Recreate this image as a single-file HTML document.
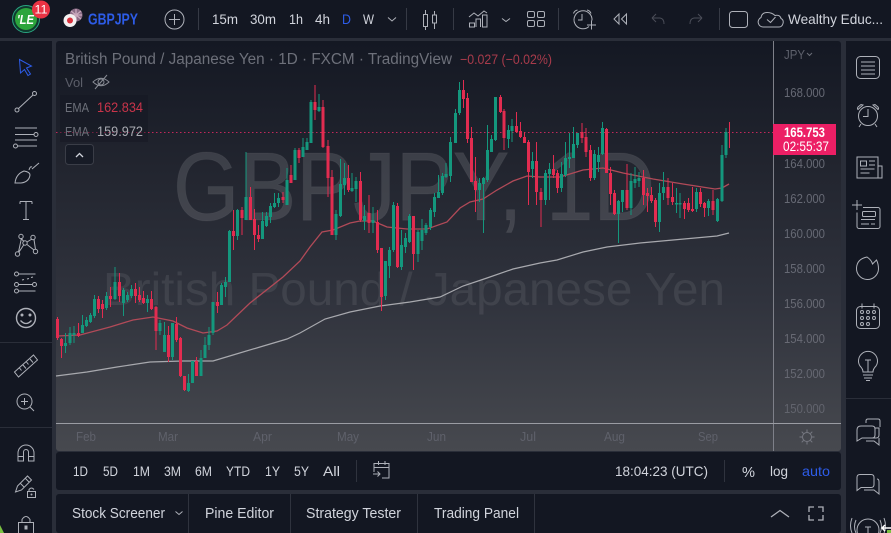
<!DOCTYPE html>
<html lang="en"><head><meta charset="utf-8"><title>GBPJPY</title>
<style>
html,body{margin:0;padding:0;background:#2a2e39;width:891px;height:533px;overflow:hidden}
svg{display:block;font-family:"Liberation Sans",sans-serif;filter:blur(.3px)}
.i{fill:none;stroke:#aeb1b9;stroke-width:1}
.t{fill:#d1d4dc;font-size:14px}
</style></head><body>
<svg width="891" height="533" viewBox="0 0 891 533" xmlns="http://www.w3.org/2000/svg">
<defs><linearGradient id="bg" gradientUnits="userSpaceOnUse" x1="0" y1="41" x2="0" y2="451">
<stop offset="0" stop-color="#141823"/><stop offset=".31" stop-color="#22252f"/><stop offset=".63" stop-color="#30333d"/><stop offset="1" stop-color="#47494f"/></linearGradient></defs>
<rect width="891" height="533" fill="#2a2e39"/>
<rect width="891" height="38" fill="#131722"/>
<rect x="0" y="41" width="52" height="492" fill="#131722"/>
<rect x="846" y="41" width="45" height="492" fill="#131722"/>
<rect x="56" y="41" width="785" height="410" rx="3" fill="url(#bg)"/>
<rect x="56" y="452" width="785" height="38" rx="3" fill="#131722"/>
<rect x="56" y="494" width="785" height="39" rx="3" fill="#131722"/>

<!-- watermark -->
<text x="173" y="220" font-size="97" fill="#fff" fill-opacity=".125" stroke="#fff" stroke-opacity=".04" textLength="482" lengthAdjust="spacingAndGlyphs">GBPJPY, 1D</text>
<text x="103" y="305" font-size="46" fill="#fff" fill-opacity=".08" textLength="622" lengthAdjust="spacingAndGlyphs">British Pound / Japanese Yen</text>

<!-- price line -->
<path d="M56 132.500H773" stroke="#c2285a" stroke-width="1" stroke-dasharray="1.500 2.500" fill="none"/>

<!-- legend -->
<rect x="60" y="95" width="88" height="47" fill="#131722" fill-opacity=".45"/>
<text x="65" y="64" font-size="15.500" fill="#6d707a" textLength="387" lengthAdjust="spacingAndGlyphs">British Pound / Japanese Yen · 1D · FXCM · TradingView</text>
<text x="460" y="64" font-size="14" fill="#a83b4b" textLength="92" lengthAdjust="spacingAndGlyphs">−0.027 (−0.02%)</text>
<text x="65" y="87" font-size="13" fill="#5b5e69">Vol</text>
<g class="i" style="stroke:#888b94"><path d="M93 82q8-7.500 16 0q-8 7.500-16 0z"/><circle cx="101" cy="82" r="3"/><path d="M95 89L107 75"/></g>
<text x="65" y="112" font-size="13" fill="#6d707a" textLength="24" lengthAdjust="spacingAndGlyphs">EMA</text>
<text x="97" y="112" font-size="13.500" fill="#c8344a" textLength="46" lengthAdjust="spacingAndGlyphs">162.834</text>
<text x="65" y="136" font-size="13" fill="#6d707a" textLength="24" lengthAdjust="spacingAndGlyphs">EMA</text>
<text x="97" y="136" font-size="13.500" fill="#a9abb2" textLength="46" lengthAdjust="spacingAndGlyphs">159.972</text>
<rect x="65.500" y="144.500" width="28" height="20" rx="3" fill="#171b26" stroke="#3a3d47"/>
<path d="M76 157l3.500-3.500 3.500 3.500" fill="none" stroke="#d1d4dc" stroke-width="1.300"/>

<!-- EMAs -->
<path fill="none" stroke="#b14a58" stroke-width="1.300" d="M57 336L80 335L110 327L133 320L153 317L173 321L187 328L203 333L217 331L227 325L250 303L283 277L300 261L310 247L322 232L333 230L350 223L360 221L373 221L387 227L407 229L427 229L447 222L460 208L470 202L483 199L497 190L513 181L527 176L540 177L560 177L583 170L603 168L623 173L653 179L683 184L715 189L722 188L729 184"/>
<path fill="none" stroke="#a8a9ae" stroke-width="1.200" d="M56 376L87 372L117 367L150 362L183 361L213 361L233 355L260 347L287 339L300 333L325 319L350 312L380 306L410 302L440 297L463 286L487 278L513 269L540 263L557 260L583 252L607 247L640 243L673 240L717 236L729 233"/>

<!-- green wicks -->
<path fill="none" stroke="#14977d" stroke-width="1" d="M65.500 333V353M70 327V345M74 326V343M82.500 315V333M86.500 317V327M90.500 313V323M94.500 295V318M106.500 292V310M115 267V300M123.500 288V316M127.500 292V302M131.500 285V298M147.500 295V312M160 320V335M164.500 322V352M172.500 323V360M188.500 374V392M192.500 361V383M201 350V376M205 337V358M209 327V350M213 302V335M221.500 283V305M225.500 277V297M229.500 230V282M237.500 209V240M246 152V220M262.500 212V239M266.500 212V227M270.500 203V223M274.500 193V208M278.500 193V207M287 168V205M295 148V180M303 138V157M307 138V150M311 100V143M319 94V112M336 210V240M340.500 159V217M344.500 163V195M352 173V192M356 177V202M364.500 205V230M373 207V233M385.500 261V300M389.500 247V278M393.500 202V252M401.500 230V270M405.500 233V253M409.500 214V243M418 230V262M422 219V250M426 223V235M430.500 208V230M434.500 193V217M438.500 175V198M442.500 173V195M446 163V178M450.500 137V182M455.500 109V143M459.500 82V115M479.500 178V202M483.500 177V233M487.500 125V182M491.500 135V152M495.500 97V141M508.500 125V148M512 119V142M532.500 152V178M545.500 170V205M549.500 163V200M561.500 162V192M565.500 142V177M569.500 133V168M573.500 127V158M577.500 133V148M594.500 150V180M598.500 147V172M602.500 122V155M618.500 200V243M622.500 190V212M631 173V215M635 167V188M639 172V187M659.500 183V232M663.500 172V200M676.500 188V213M680 193V218M696.500 188V212M708.500 199V216M717.500 198V222M722 145V202M726 128V158"/>
<!-- green bodies -->
<path fill="none" stroke="#14977d" stroke-width="3" d="M65.500 343V346M70 333V343M74 333V335M82.500 325V333M86.500 320V326M90.500 315V322M94.500 299V316M106.500 296V308M115 282V299M123.500 290V303M127.500 295V300M131.500 289V296M147.500 299V303M160 323V331M164.500 335V352M172.500 323V357M188.500 383V391M192.500 361V383M201 358V376M205 345V358M209 335V345M213 302V333M221.500 285V305M225.500 282V287M229.500 231V282M237.500 210V236M246 197V220M262.500 221V239M266.500 216V226M270.500 206V217M274.500 203V207M278.500 198V203M287 180V205M295 150V180M303 147V157M307 142V150M311 102V143M319 107V111M336 214V235M340.500 184V216M344.500 178V185M352 188V191M356 181V189M364.500 216V221M373 220V223M385.500 261V296M389.500 250V266M393.500 205V250M401.500 245V267M405.500 238V247M409.500 216V242M418 232V254M422 230V241M426 225V233M430.500 210V227M434.500 197V212M438.500 192V198M442.500 176V193M446 174V177M450.500 142V176M455.500 113V143M459.500 90V113M479.500 183V190M483.500 178V184M487.500 150V180M491.500 139V152M495.500 97V140M508.500 130V139M512 126V131M532.500 161V169M545.500 173V200M549.500 169V174M561.500 174V188M565.500 158V175M569.500 157V159M573.500 144V158M577.500 133V145M594.500 154V178M598.500 155V162M602.500 128V154M618.500 201V214M622.500 190V202M631 181V208M635 179V183M639 178V181M659.500 193V222M663.500 187V193M676.500 203V204.500M680 203V204.500M696.500 192V209M708.500 201V208M717.500 199V221M722 155V201M726 132V155"/>
<!-- red wicks -->
<path fill="none" stroke="#e22c50" stroke-width="1" d="M57.500 317V340M61.500 338V358M78.500 323V337M98.500 296V313M102.500 300V318M110.500 287V307M119.500 273V302M135.500 283V303M139.500 287V302M143.500 291V304M151.500 291V310M156 306V350M168.500 326V362M176.500 317V342M180.500 337V377M184.500 376V391M196.500 357V376M217.500 292V313M233.500 210V250M242 207V235M250.500 187V220M254.500 209V250M258.500 225V242M283 192V203M291 165V183M299 148V163M315 85V120M323 100V148M328 140V197M332 170V235M348.500 165V192M360.500 172V222M369 195V233M377.500 210V253M381.500 248V311M397.500 203V268M413.500 216V270M463.500 80V108M467.500 93V143M471.500 127V182M475.500 157V212M500.500 95V113M504 109V150M516.500 112V133M520.500 122V138M524.500 132V143M528.500 140V205M536.500 142V205M541 188V227M553.500 155V178M557.500 170V193M582 123V143M586 128V157M590.500 145V181M606.500 128V173M610.500 167V205M614.500 190V215M627 164V210M643.500 170V205M647.500 188V212M651.500 187V203M655.500 198V227M668 178V205M672.500 183V205M684.500 201V219M688.500 198V212M692.500 187V212M700.500 188V207M704.500 202V217M713 190V215M729.500 122V148"/>
<!-- red bodies -->
<path fill="none" stroke="#e22c50" stroke-width="3" d="M57.500 319V338M61.500 339V346M78.500 333V336M98.500 299V309M102.500 304V309M110.500 296V299M119.500 282V296M135.500 289V296M139.500 295V300M143.500 298V303M151.500 299V309M156 307V331M168.500 335V357M176.500 324V340M180.500 338V376M184.500 376V390M196.500 361V376M217.500 302V306M233.500 231V236M242 210V218M250.500 197V220M254.500 219V235M258.500 235V239M283 197V200M291 175V183M299 150V158M315 102V110M323 107V147M328 146V178M332 177V235M348.500 178V190M360.500 181V220M369 213V223M377.500 222V250M381.500 248V297M397.500 206V267M413.500 216V254M463.500 90V99M467.500 98V139M471.500 138V182M475.500 181V190M500.500 97V112M504 111V138M516.500 126V132M520.500 131V137M524.500 137V143M528.500 142V172M536.500 161V192M541 192V200M553.500 169V175M557.500 173V188M582 132V138M586 137V152M590.500 150V178M606.500 129V173M610.500 173V194M614.500 193V214M627 190V208M643.500 178V195M647.500 193V196M651.500 195V201M655.500 200V222M668 187V198M672.500 197V202M684.500 203V209M688.500 203V210M692.500 209V211M700.500 192V204M704.500 203V208M713 201V210"/>

<!-- axes -->
<path d="M773.500 41V451" stroke="#7e8089"/>
<path d="M56 423.500H841" stroke="#9a9ca3"/>
<g font-size="13" fill="#666974">
<text x="784" y="59" fill="#5d606b" textLength="21" lengthAdjust="spacingAndGlyphs">JPY</text>
<text x="784" y="97" textLength="41" lengthAdjust="spacingAndGlyphs">168.000</text>
<text x="784" y="133" textLength="41" lengthAdjust="spacingAndGlyphs">166.000</text>
<text x="784" y="168" textLength="41" lengthAdjust="spacingAndGlyphs">164.000</text>
<text x="784" y="203" textLength="41" lengthAdjust="spacingAndGlyphs">162.000</text>
<text x="784" y="238" textLength="41" lengthAdjust="spacingAndGlyphs">160.000</text>
<text x="784" y="273" textLength="41" lengthAdjust="spacingAndGlyphs">158.000</text>
<text x="784" y="308" textLength="41" lengthAdjust="spacingAndGlyphs" fill="#686a74">156.000</text>
<text x="784" y="343" textLength="41" lengthAdjust="spacingAndGlyphs" fill="#686a74">154.000</text>
<text x="784" y="378" textLength="41" lengthAdjust="spacingAndGlyphs" fill="#666872">152.000</text>
<text x="784" y="413" textLength="41" lengthAdjust="spacingAndGlyphs" fill="#62646d">150.000</text>
</g>
<path d="M807 53l2.500 2.500 2.500-2.500" fill="none" stroke="#6a6d77"/>
<rect x="773" y="124" width="63" height="31" fill="#ec1f65"/>
<text x="784" y="137" font-size="13.500" font-weight="bold" fill="#fff" textLength="41" lengthAdjust="spacingAndGlyphs">165.753</text>
<text x="783" y="151" font-size="13.500" fill="#fff" textLength="46" lengthAdjust="spacingAndGlyphs">02:55:37</text>
<g font-size="13" fill="#5f616b">
<text x="76" y="441" textLength="20" lengthAdjust="spacingAndGlyphs">Feb</text>
<text x="158" y="441" textLength="20" lengthAdjust="spacingAndGlyphs">Mar</text>
<text x="253" y="441" textLength="19" lengthAdjust="spacingAndGlyphs">Apr</text>
<text x="337" y="441" textLength="22" lengthAdjust="spacingAndGlyphs">May</text>
<text x="427" y="441" textLength="19" lengthAdjust="spacingAndGlyphs">Jun</text>
<text x="520" y="441" textLength="16" lengthAdjust="spacingAndGlyphs">Jul</text>
<text x="604" y="441" textLength="21" lengthAdjust="spacingAndGlyphs">Aug</text>
<text x="698" y="441" textLength="20" lengthAdjust="spacingAndGlyphs">Sep</text>
</g>
<g class="i" style="stroke:#777982"><circle cx="807" cy="437" r="4.500"/><path d="M807 429.500v2.500M807 442v2.500M799.500 437h2.500M812 437h2.500M801.700 431.700l1.800 1.800M810.500 440.500l1.800 1.800M801.700 442.300l1.800-1.800M810.500 433.500l1.800-1.800"/></g>

<!-- top bar -->
<circle cx="26" cy="19" r="13.500" fill="#0f3a2e" stroke="#2aa580" stroke-width="1"/>
<circle cx="26" cy="19" r="11" fill="#2ca53c"/>
<text x="17" y="24" font-size="13" font-weight="bold" font-style="italic" fill="#fff" textLength="17" lengthAdjust="spacingAndGlyphs">'LE</text>
<circle cx="41" cy="9.500" r="9" fill="#ea3344"/>
<text x="34.500" y="13.500" font-size="11.500" fill="#fff" textLength="13" lengthAdjust="spacingAndGlyphs">11</text>
<circle cx="76" cy="15" r="6.500" fill="#8a6c86"/>
<path d="M71 11l10 8M81 11l-10 8M76 9v12M70 15h12" stroke="#c9a9bd" stroke-width="1.300"/>
<circle cx="70" cy="20.500" r="6.500" fill="#f3f1f1"/><circle cx="70" cy="20.500" r="3" fill="#d9323e"/>
<text x="88" y="24.500" font-size="15.500" font-weight="bold" fill="#2d5ce8" textLength="50" lengthAdjust="spacingAndGlyphs">GBPJPY</text>
<g class="i"><circle cx="174.500" cy="19.500" r="9.500"/><path d="M174.500 14v11M169 19.500h11"/></g>
<path d="M198.500 8v22M406.500 8v22M453.500 8v22M558.500 8v22M719.500 8v22" stroke="#363a45"/>
<g class="t">
<text x="212" y="24" textLength="26" lengthAdjust="spacingAndGlyphs">15m</text>
<text x="250" y="24" textLength="26" lengthAdjust="spacingAndGlyphs">30m</text>
<text x="289" y="24" textLength="14" lengthAdjust="spacingAndGlyphs">1h</text>
<text x="315" y="24" textLength="15" lengthAdjust="spacingAndGlyphs">4h</text>
<text x="342" y="24" fill="#2d5ce8" textLength="9" lengthAdjust="spacingAndGlyphs">D</text>
<text x="363" y="24" textLength="11" lengthAdjust="spacingAndGlyphs">W</text>
<text x="788" y="24" textLength="95" lengthAdjust="spacingAndGlyphs">Wealthy Educ...</text>
</g>
<g class="i">
<path d="M388 17.500l4 3.500 4-3.500"/>
<path d="M423.500 14.500h4v12h-4zM425.500 10v4.500M425.500 26.500v3.500M432.500 15h4v8h-4zM434.500 11v4M434.500 23v6"/>
<path d="M469 17l5-4 4 3 6-5 3 2M469.500 27h5v-4h-5zM476 27v-8h4.500v8M482.500 27V15h4.500v12h-5"/>
<path d="M502 18.500l4 3 4-3"/>
<rect x="527.500" y="11.500" width="7" height="6" rx="1.500"/><rect x="537.500" y="11.500" width="7" height="6" rx="1.500"/><rect x="527.500" y="20.500" width="7" height="6" rx="1.500"/><rect x="537.500" y="20.500" width="7" height="6" rx="1.500"/>
<path d="M589 26.500a9 9 0 1 1 3-6M582 14v6h-4M573.500 13.500q1-3 4-3.500M587 10q3 .5 4 3.500M587 25h9M591.500 20.500v9"/>
<path d="M614 19l5-5v10zM621.500 19l5-5v10z"/>
<path d="M652 18l4-4M652 18l4 4M652 18h8q4 .5 4 6" stroke="#4a4d58"/>
<path d="M702 18l-4-4M702 18l-4 4M702 18h-8q-4 .5-4 6" stroke="#4a4d58"/>
<rect x="729.500" y="11.500" width="18" height="16" rx="3"/>
<path d="M766 27h-3a5 5 0 0 1-2-9.500q1-5 6-5t8 3q5-1 6 3 3 1.500 2 5t-4 3.500zM767 19.500l3.500 3 5-5.500"/>
</g>

<!-- bottom toolbar -->
<g fill="#d1d4dc" font-size="14">
<text x="73" y="476" textLength="15" lengthAdjust="spacingAndGlyphs">1D</text>
<text x="103" y="476" textLength="15" lengthAdjust="spacingAndGlyphs">5D</text>
<text x="133" y="476" textLength="17" lengthAdjust="spacingAndGlyphs">1M</text>
<text x="164" y="476" textLength="17" lengthAdjust="spacingAndGlyphs">3M</text>
<text x="195" y="476" textLength="17" lengthAdjust="spacingAndGlyphs">6M</text>
<text x="226" y="476" textLength="24" lengthAdjust="spacingAndGlyphs">YTD</text>
<text x="265" y="476" textLength="15" lengthAdjust="spacingAndGlyphs">1Y</text>
<text x="294" y="476" textLength="15" lengthAdjust="spacingAndGlyphs">5Y</text>
<text x="323" y="476" textLength="17" lengthAdjust="spacingAndGlyphs">All</text>
<text x="615" y="476" textLength="93" lengthAdjust="spacingAndGlyphs">18:04:23 (UTC)</text>
<text x="742" y="477" font-size="15" textLength="13" lengthAdjust="spacingAndGlyphs">%</text>
<text x="770" y="476" textLength="18" lengthAdjust="spacingAndGlyphs">log</text>
<text x="802" y="476" fill="#2d5ce8" textLength="28" lengthAdjust="spacingAndGlyphs">auto</text>
</g>
<path d="M356.500 460v22M724.500 460v22" stroke="#2f333e"/>
<g class="i"><path d="M374 472v-8.500h15v14.500h-7M374 467.500h15M378.500 461v4M385 461v4M373 474h7M377.500 471.500l2.500 2.500-2.500 2.500"/></g>

<!-- bottom tabs -->
<g fill="#d1d4dc" font-size="14.500">
<text x="72" y="518" textLength="93" lengthAdjust="spacingAndGlyphs">Stock Screener</text>
<text x="205" y="518" textLength="69" lengthAdjust="spacingAndGlyphs">Pine Editor</text>
<text x="306" y="518" textLength="95" lengthAdjust="spacingAndGlyphs">Strategy Tester</text>
<text x="434" y="518" textLength="85" lengthAdjust="spacingAndGlyphs">Trading Panel</text>
</g>
<path d="M188.500 494v39M290.500 494v39M417.500 494v39M534.500 494v39" stroke="#2f333e"/>
<g class="i"><path d="M175.500 511.500l3.500 3 3.500-3"/><path d="M771 517l9-6.500 9 6.500" stroke-width="1.300"/><path d="M809 512v-5h5M818 507h5v5M823 515v5h-5M814 520h-5v-5" stroke-width="1.300"/></g>

<!-- left toolbar -->
<g class="i">
<path d="M19.500 59.500l12 6.500-5 2 4 6-2.500 1.500-3.500-6-4 3.500z" style="stroke:#2d5ce8"/>
<circle cx="17" cy="110" r="2"/><circle cx="34.500" cy="93.500" r="2"/><path d="M18.500 108.500l14.500-13.500"/>
<path d="M15 128h22M15 134.500h19M15 140h22M18 146h19"/><circle cx="36" cy="134.500" r="2"/><circle cx="15.500" cy="146" r="2"/>
<path d="M15 183q1-9 9-12 6 1 6 4-1 7-9 8zM29 170q1-4 3-3M32 169l7-6"/>
<path d="M20 201.500h12M26 201.500v18M23 219.500h6M20 201.500v2.500M32 201.500v2.500"/>
<circle cx="21" cy="236.500" r="2.200"/><circle cx="33" cy="237.500" r="2.200"/><circle cx="25" cy="243" r="2.200"/><circle cx="17.500" cy="254" r="2.200"/><circle cx="35.500" cy="251.500" r="2.200"/>
<path d="M21 238.500l3 3M27 242l5-3M19 252l5-7.500M27 244.500l7 5.500M18.500 252l3-14M34 239.500l1.500 10"/>
<circle cx="16.500" cy="274" r="2"/><path d="M18.500 274h17"/><circle cx="16.500" cy="284.500" r="2"/><circle cx="34.500" cy="284.500" r="2"/><path d="M18.500 284.500h14"/><circle cx="16.500" cy="291" r="2"/><path d="M18.500 291h17M22 280l2-.5M27 279l2-.5M31 277.500l2-.5"/>
<circle cx="26" cy="318" r="9.500" stroke-width="1.400"/><circle cx="22" cy="315" r="1" fill="#aeb1b9"/><circle cx="30" cy="315" r="1" fill="#aeb1b9"/><path d="M20.500 320.500q5.500 6 11 0" stroke-width="1.300"/>
<path d="M14.500 372l19-17 4 5-19 17zM19.500 368l2 2.500M23 365l3 3.500M26.500 362l2 2.500M30 359l3 3.500"/>
<circle cx="24.500" cy="401.500" r="7.500"/><path d="M24.500 398v7M21 401.500h7M30 407l4 4"/>
<path d="M18 461v-8a8 8 0 0 1 16 0v8h-5.500v-9a2.500 2.500 0 0 0-5 0v9zM18 456.500h5.500M28.500 456.500H34"/>
<path d="M15.500 492l2-6 10-10 4 4-10 10zM20 483l4 4M25 478l4 4"/><rect x="27.500" y="491.500" width="8" height="6"/><path d="M29 491.500v-2q2.500-3 5 0"/><circle cx="31.500" cy="494.500" r=".5"/>
<rect x="18.500" y="522.500" width="15" height="15"/><path d="M22 522.500v-3q4-6 8 0v3"/><rect x="25" y="526" width="2" height="3" fill="#aeb1b9"/>
</g>
<path d="M0 342.500H52M0 427.500H52" stroke="#2a2e39"/>
<path d="M0 525l4 8H0z" fill="#7bc142"/>

<!-- right toolbar -->
<g class="i">
<rect x="856.500" y="56.500" width="23" height="22" rx="4"/><path d="M861 62h14M861 66h14M861 70h14M861 74h14"/>
<circle cx="868" cy="116" r="9.500"/><path d="M868 109v7.500h-5M858 107l3-2.500 2 .5-5 4.500q-1-1 0-2.500zM878 107l-3-2.500-2 .5 5 4.500q1-1 0-2.500zM861 124l-2 3M875 124l2 3"/>
<path d="M879 178h-22v-21h21v21M878 166h4v12h-4"/><path d="M860.500 161h6v5h-6zM869 161h6M869 165h6M860.500 169h14M860.500 173h9"/>
<path d="M863 207.500h15a2 2 0 0 1 2 2v17a2 2 0 0 1-2 2h-19a2 2 0 0 1-2-2v-14"/><path d="M857 200v10M852 205h10"/><rect x="862.500" y="211.500" width="13" height="5" rx="1"/><path d="M861 219.500h14M861 224h8M871 224h4"/>
<path d="M867 257q-10 2-10.500 11a11 11 0 0 0 22 1q0-5-2-9l-4 4q-1-4-5.500-7z"/>
<rect x="856.500" y="306.500" width="23" height="22" rx="4"/><path d="M862 303.500v5M874 303.500v5"/><circle cx="862" cy="312" r="1.500"/><circle cx="868" cy="312" r="1.500"/><circle cx="874" cy="312" r="1.500"/><circle cx="862" cy="318" r="1.500"/><circle cx="868" cy="318" r="1.500"/><circle cx="874" cy="318" r="1.500"/><circle cx="862" cy="324" r="1.500"/><circle cx="868" cy="324" r="1.500"/>
<path d="M863 372q0-3-3-6a9.500 9.500 0 1 1 16 0q-3 3-3 6zM868 372v-12M865 360h6M863 375h10M864 378h8M866 380.500h4"/>
<path d="M857 441v-11q0-4 4-4h11q3 0 3 3v6q0 3-3 3h-10zM866 423v-2q0-2 2-2h10q2 0 2 2v6M876 438h-8M876 438q3 0 3-3v-7h-4M879 438v7l-5-4h-8"/>
<path d="M857 490.500v-13q0-3 3-3h11q3 0 3 3v7q0 3-3 3h-10zM877 479q2 0 2 3v12l-5-4h-10"/>
<circle cx="868" cy="530" r="11"/><path d="M856 520q-3 7 0 13M852 518q-3 8 0 15M880 520q3 7 0 13M884 518q3 8 0 15M865 527h6M868 527v6"/>
</g>
<path d="M846 398.500H891" stroke="#2a2e39"/>
<!-- cursor -->
<path d="M882 528h9M885 525l-3 3 3 3" fill="none" stroke="#fff" stroke-width="1.500"/>
<path d="M887 530h4v3h-4z" fill="#7bc142"/>
</svg>
</body></html>
